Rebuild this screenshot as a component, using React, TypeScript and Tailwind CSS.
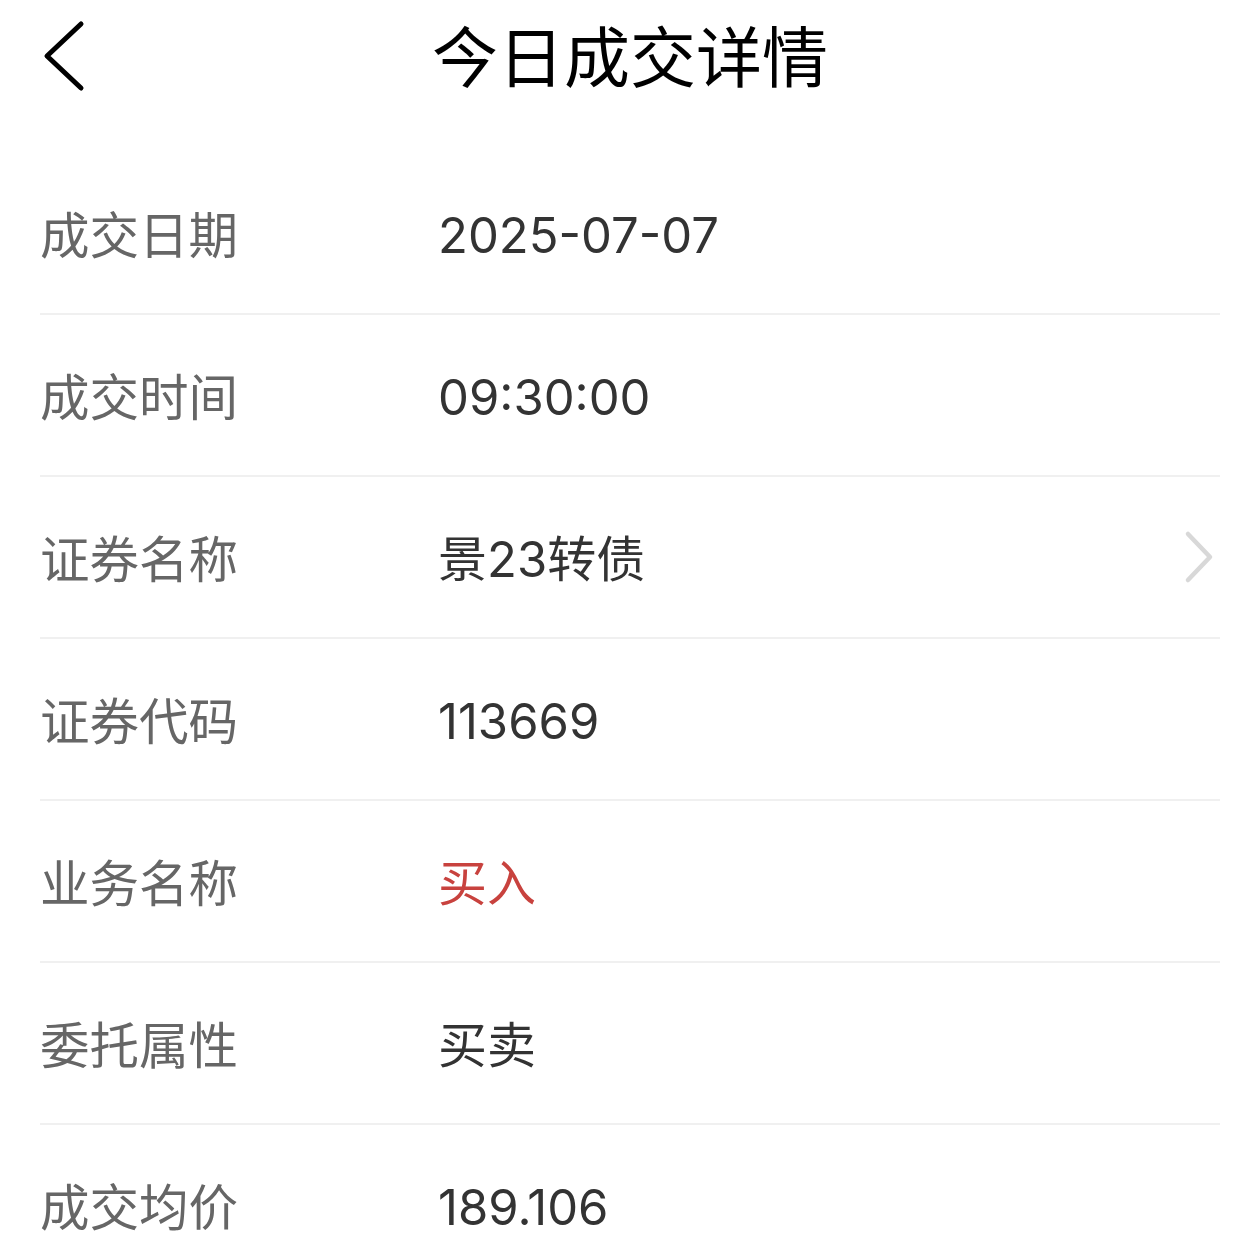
const rows = [
  { label: '成交日期', value: '2025-07-07' },
  { label: '成交时间', value: '09:30:00' },
  { label: '证券名称', value: '景23转债', link: true },
  { label: '证券代码', value: '113669' },
  { label: '业务名称', value: '买入', red: true },
  { label: '委托属性', value: '买卖' },
  { label: '成交均价', value: '189.106' },
];

export default function App() {
  return (
    <div
      className="w-[1260px] h-[1256px] overflow-hidden bg-white"
      style={{ fontFamily: '"Noto Sans CJK SC", "Noto Sans", sans-serif' }}
    >
      {/* Header */}
      <div className="relative h-[116px] flex items-start justify-center pt-[20px]">
        <button className="absolute left-[40px] top-[18px] text-black">
          <svg width="48" height="76" viewBox="0 0 48 76" fill="none">
            <path
              d="M41 6 L7 38 L41 70"
              stroke="currentColor"
              strokeWidth="5"
              strokeLinecap="round"
              strokeLinejoin="round"
            />
          </svg>
        </button>
        <h1 className="text-[66px] leading-none text-black">今日成交详情</h1>
      </div>

      {/* Detail rows */}
      <div className="pt-[37px] px-[40px]">
        {rows.map((row) => (
          <div
            key={row.label}
            className="h-[162px] flex items-center border-b-2 border-[#f0f0f0]"
          >
            <div className="w-[398px] text-[49.5px] text-[#666666]">{row.label}</div>
            <div
              className={`flex-1 pt-[5px] text-[49px] ${row.red ? 'text-[#c8423e]' : 'text-[#333333]'}`}
              style={{ fontFamily: 'Inter, "Noto Sans CJK SC", sans-serif' }}
            >
              {row.value}
            </div>
            {row.link && (
              <svg width="40" height="60" viewBox="0 0 40 60" fill="none" className="mr-[6px]">
                <path
                  d="M14 7 L36 30 L14 53"
                  stroke="#d8d8d8"
                  strokeWidth="4.5"
                  strokeLinecap="round"
                  strokeLinejoin="round"
                />
              </svg>
            )}
          </div>
        ))}
      </div>
    </div>
  );
}
